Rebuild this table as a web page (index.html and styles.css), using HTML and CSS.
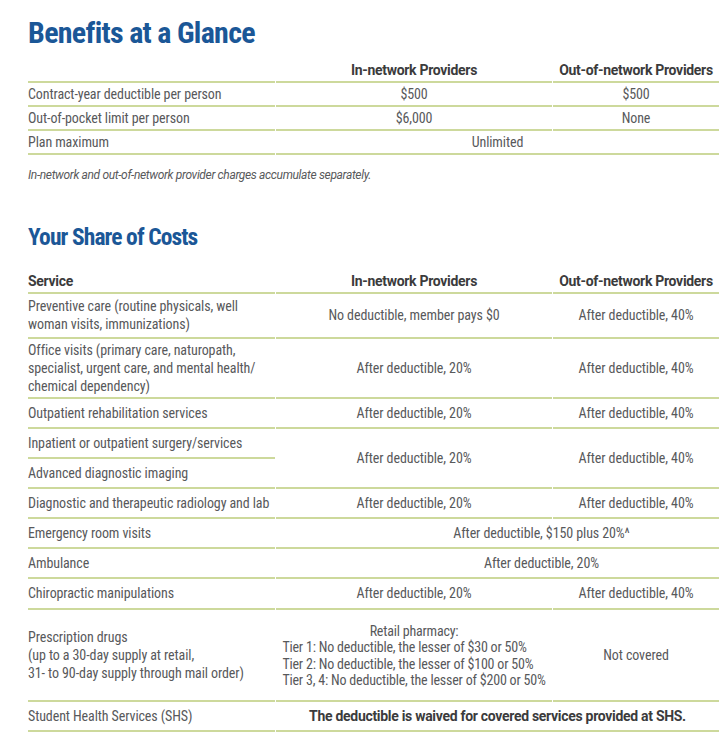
FILE: index.html
```html
<!DOCTYPE html>
<html lang="en">
<head>
<meta charset="utf-8">
<title>Benefits at a Glance</title>
<link rel="stylesheet" href="styles.css">
</head>
<body>
<main class="page">
  <h1 class="title">Benefits at a Glance</h1>
  <table class="grid glance">
    <colgroup><col class="c1"><col class="c2"><col class="c3"></colgroup>
    <thead>
      <tr><th class="left"></th><th>In-network Providers</th><th>Out-of-network Providers</th></tr>
    </thead>
    <tbody>
      <tr><td class="left">Contract-year deductible per person</td><td>$500</td><td>$500</td></tr>
      <tr><td class="left">Out-of-pocket limit per person</td><td>$6,000</td><td>None</td></tr>
      <tr><td class="left">Plan maximum</td><td colspan="2">Unlimited</td></tr>
    </tbody>
  </table>
  <p class="note">In-network and out-of-network provider charges accumulate separately.</p>

  <h2 class="title small">Your Share of Costs</h2>
  <table class="grid costs">
    <colgroup><col class="c1"><col class="c2"><col class="c3"></colgroup>
    <thead>
      <tr><th class="left">Service</th><th>In-network Providers</th><th>Out-of-network Providers</th></tr>
    </thead>
    <tbody>
      <tr class="multi two"><td class="left">Preventive care (routine physicals, well<br>woman visits, immunizations)</td><td>No deductible, member pays $0</td><td>After deductible, 40%</td></tr>
      <tr class="multi three"><td class="left">Office visits (primary care, naturopath,<br>specialist, urgent care, and mental health/<br>chemical dependency)</td><td>After deductible, 20%</td><td>After deductible, 40%</td></tr>
      <tr><td class="left">Outpatient rehabilitation services</td><td>After deductible, 20%</td><td>After deductible, 40%</td></tr>
      <tr><td class="left">Inpatient or outpatient surgery/services</td><td rowspan="2">After deductible, 20%</td><td rowspan="2">After deductible, 40%</td></tr>
      <tr><td class="left">Advanced diagnostic imaging</td></tr>
      <tr><td class="left">Diagnostic and therapeutic radiology and lab</td><td>After deductible, 20%</td><td>After deductible, 40%</td></tr>
      <tr><td class="left">Emergency room visits</td><td colspan="2" class="shift">After deductible, $150 plus 20%^</td></tr>
      <tr><td class="left">Ambulance</td><td colspan="2" class="shift">After deductible, 20%</td></tr>
      <tr class="chiro"><td class="left">Chiropractic manipulations</td><td>After deductible, 20%</td><td>After deductible, 40%</td></tr>
      <tr class="rx">
        <td class="left">Prescription drugs<br>(up to a 30-day supply at retail,<br>31- to 90-day supply through mail order)</td>
        <td>
          <div class="tiers">
            <div class="tiers-head">Retail pharmacy:</div>
            <div>Tier 1: No deductible, the lesser of $30 or 50%</div>
            <div>Tier 2: No deductible, the lesser of $100 or 50%</div>
            <div>Tier 3, 4: No deductible, the lesser of $200 or 50%</div>
          </div>
        </td>
        <td>Not covered</td>
      </tr>
      <tr><td class="left">Student Health Services (SHS)</td><td colspan="2" class="strong">The deductible is waived for covered services provided at SHS.</td></tr>
    </tbody>
  </table>
</main>
</body>
</html>
```
FILE: styles.css
```css
html, body {
  margin: 0;
  padding: 0;
  background: #ffffff;
}

body {
  font-family: Roboto, "Liberation Sans", sans-serif;
  color: #58595b;
  font-size: 14px;
  font-stretch: 75%;
  letter-spacing: -0.1px;
}

.page {
  padding: 16px 0 0 28px;
  width: 693px;
}

.title {
  margin: 0;
  color: #1b5797;
  font-weight: bold;
  font-size: 30px;
  line-height: 34px;
  letter-spacing: -0.7px;
  font-stretch: 75%;
}

.title.small {
  font-size: 23.5px;
  line-height: 28px;
  letter-spacing: -0.9px;
  margin-top: 40px;
}

.grid {
  border-collapse: separate;
  border-spacing: 1px 0;
  width: 693px;
  margin-left: -1px;
  table-layout: fixed;
}

.c1 { width: 247px; }
.c2 { width: 276px; }
.c3 { width: 166px; }

.grid th,
.grid td {
  padding: 0;
  text-align: center;
  vertical-align: middle;
  border-bottom: 2px solid #cdd99c;
  white-space: nowrap;
}

.grid th {
  color: #3b3b3c;
  font-weight: bold;
  font-stretch: 100%;
  letter-spacing: -0.3px;
}

.grid .left {
  text-align: left;
}

.glance {
  margin-top: 9px;
}

.glance th,
.glance td {
  line-height: 22px;
}

.note {
  margin: 12px 0 0;
  font-style: italic;
  font-size: 12px;
  font-stretch: 100%;
  letter-spacing: -0.35px;
  line-height: 16px;
}

.costs {
  margin-top: 20px;
}

.costs th {
  line-height: 21px;
}

.costs td {
  line-height: 28px;
}

.costs tr.multi td {
  line-height: 18px;
}

.costs tr.two td {
  padding: 3px 0 4px;
}

.costs tr.three td {
  padding: 2px 0 2px;
}

.costs tr.chiro td {
  line-height: 29px;
}

.costs td.shift {
  padding-left: 88px;
}

.costs tr.rx td {
  height: 90px;
  line-height: 18px;
}

.tiers {
  display: inline-block;
  text-align: left;
  line-height: 16.5px;
  padding-top: 2px;
  letter-spacing: -0.2px;
}

.tiers-head {
  text-align: center;
}

.costs td.strong {
  color: #3b3b3c;
  font-weight: bold;
  font-stretch: 100%;
  letter-spacing: -0.3px;
}
```
